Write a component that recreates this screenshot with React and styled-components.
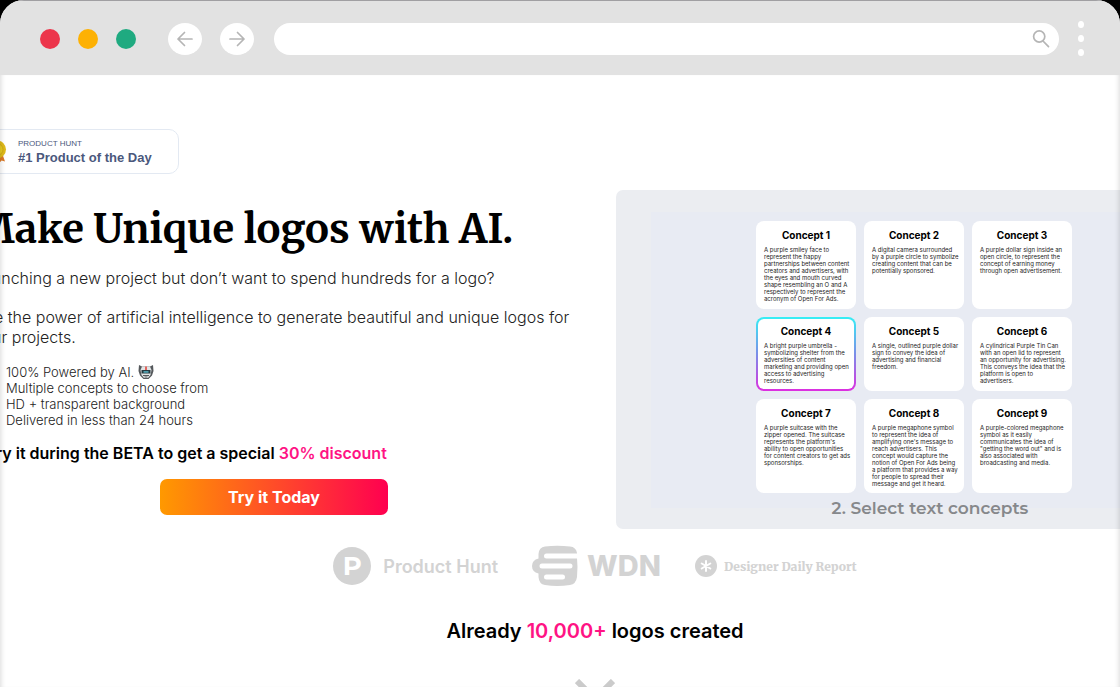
import React from "react";
import styled, { createGlobalStyle } from "styled-components";

const concepts = [
  {
    id: 1,
    text: "A purple smiley face to\nrepresent the happy\npartnerships between content\ncreators and advertisers, with\nthe eyes and mouth curved\nshape resembling an O and A\nrespectively to represent the\nacronym of Open For Ads.",
  },
  {
    id: 2,
    text: "A digital camera surrounded\nby a purple circle to symbolize\ncreating content that can be\npotentially sponsored.",
  },
  {
    id: 3,
    text: "A purple dollar sign inside an\nopen circle, to represent the\nconcept of earning money\nthrough open advertisement.",
  },
  {
    id: 4,
    selected: true,
    text: "A bright purple umbrella -\nsymbolizing shelter from the\nadversities of content\nmarketing and providing open\naccess to advertising\nresources.",
  },
  {
    id: 5,
    text: "A single, outlined purple dollar\nsign to convey the idea of\nadvertising and financial\nfreedom.",
  },
  {
    id: 6,
    text: "A cylindrical Purple Tin Can\nwith an open lid to represent\nan opportunity for advertising.\nThis conveys the idea that the\nplatform is open to\nadvertisers.",
  },
  {
    id: 7,
    text: "A purple suitcase with the\nzipper opened. The suitcase\nrepresents the platform's\nability to open opportunities\nfor content creators to get ads\nsponsorships.",
  },
  {
    id: 8,
    text: "A purple megaphone symbol\nto represent the idea of\namplifying one's message to\nreach advertisers. This\nconcept would capture the\nnotion of Open For Ads being\na platform that provides a way\nfor people to spread their\nmessage and get it heard.",
  },
  {
    id: 9,
    text: "A purple-colored megaphone\nsymbol as it easily\ncommunicates the idea of\n\"getting the word out\" and is\nalso associated with\nbroadcasting and media.",
  },
];

const Arrow = ({ back }) => (
  <svg width="18" height="16" viewBox="0 0 18 16" fill="none" stroke="#b5b5b5" strokeWidth="1.7" strokeLinecap="round" strokeLinejoin="round" aria-hidden="true">
    {back ? <path d="M16 8H2M8.5 1.5L2 8l6.5 6.5" /> : <path d="M2 8h14M9.5 1.5L16 8l-6.5 6.5" />}
  </svg>
);

const Toolbar = () => (
  <Bar>
    <Lights>
      <Light $color="#ec354b" />
      <Light $color="#fdb104" />
      <Light $color="#1faa80" />
    </Lights>
    <NavButtons>
      <NavButton type="button" aria-label="Back">
        <Arrow back />
      </NavButton>
      <NavButton type="button" aria-label="Forward">
        <Arrow />
      </NavButton>
    </NavButtons>
    <Address>
      <input type="text" aria-label="Address" />
      <svg width="18" height="18" viewBox="0 0 18 18" fill="none" stroke="#b5b5b5" strokeWidth="1.7" strokeLinecap="round" aria-hidden="true">
        <circle cx="7.2" cy="6.5" r="5.6" />
        <path d="M11 11l5.5 5.7" />
      </svg>
    </Address>
    <MenuButton type="button" aria-label="Menu">
      <span />
      <span />
      <span />
    </MenuButton>
  </Bar>
);

const Medal = () => (
  <svg width="20" height="24" viewBox="0 0 20 24" aria-hidden="true">
    <path d="M5 13L2 22l4-1.5L8 24l3-8zM15 13l3 8.5-3.5-1L12 23.5 9 16z" fill="#dd7a26" />
    <circle cx="10" cy="9.5" r="9" fill="#e0bb1b" />
    <circle cx="10" cy="9.5" r="6" fill="#e8cb22" stroke="#cfab16" />
  </svg>
);

const Robot = () => (
  <svg width="16" height="16" viewBox="0 0 16 16" aria-hidden="true">
    <path d="M1 1l3 1.5h8L15 1l.5 6-1.5 4.500L10.500 15h-5L2 11.500.5 7z" fill="#55595c" />
    <path d="M4 2.500h8L13.500 6l-1 5-2.500 3H6l-2.500-3-1-5z" fill="#e3e5e6" />
    <path d="M3.500 6h9v3.500h-9z" fill="#26383f" />
    <path d="M5.500 7h5v1.800h-5z" fill="#4f9fae" />
    <path d="M7.200 2.500h1.600V6H7.200z" fill="#e2453c" />
    <path d="M5 11.500h6M6.500 13h3" stroke="#55595c" />
  </svg>
);

const App = () => {
  return (
    <>
      <GlobalStyle />
      <Browser>
        <Toolbar />
        <Page>
          <Badge href="#product-hunt">
            <Medal />
            <span>
              <small>PRODUCT HUNT</small>
              <strong>#1 Product of the Day</strong>
            </span>
          </Badge>
          <Hero>
            <Intro>
              <h1>Make Unique logos with AI.</h1>
              <p>Launching a new project but don’t want to spend hundreds for a logo?</p>
              <p>Use the power of artificial intelligence to generate beautiful and unique logos for your projects.</p>
              <ul>
                <li>
                  100% Powered by AI. <Robot />
                </li>
                <li>Multiple concepts to choose from</li>
                <li>HD + transparent background</li>
                <li>Delivered in less than 24 hours</li>
              </ul>
              <h2>
                Try it during the BETA to get a special <Pink>30% discount</Pink>
              </h2>
              <TryButton type="button">Try it Today</TryButton>
            </Intro>
            <Demo>
              <Pane>
                <Concepts>
                  {concepts.map(({ id, text, selected }) => (
                    <Concept key={id} $selected={selected}>
                      <h3>Concept {id}</h3>
                      <p>{text}</p>
                    </Concept>
                  ))}
                </Concepts>
              </Pane>
              <figcaption>2. Select text concepts</figcaption>
            </Demo>
          </Hero>
          <Press>
            <Brand $gap="12px">
              <Disc>P</Disc>
              <ProductHunt>Product Hunt</ProductHunt>
            </Brand>
            <Brand $gap="9px">
              <svg width="46" height="42" viewBox="0 0 46 42" aria-hidden="true">
                <path
                  d="M13 1.500Q25 0 38 1.500Q44 2 45 8L45 13Q46 22 45 32Q44 39 38 40Q25 42 13 40Q7 39 6.500 32V28.500Q0 27 0 21Q0 15 6.500 13.500V9Q7 2 13 1.500z"
                  fill="#d3d3d3"
                />
                <path d="M14.500 8.500H46v5H14.500q-2.500 0-2.500-2.500t2.500-2.500zM10 18.500h28q2.500 0 2.500 2.500T38 23.500H10q-2.500 0-2.500-2.500t2.500-2.500zM14.500 29.500h16q2.500 0 2.500 2.500t-2.500 2.500h-16Q12 34.500 12 32t2.500-2.500z" fill="#fff" />
              </svg>
              <Wdn>WDN</Wdn>
            </Brand>
            <Brand $gap="7px">
              <svg width="22" height="22" viewBox="0 0 22 22" aria-hidden="true">
                <circle cx="11" cy="11" r="11" fill="#d3d3d3" />
                <path d="M11 6v10M6.700 8.500l8.600 5M15.300 8.500l-8.600 5" stroke="#fff" strokeWidth="2" strokeLinecap="round" />
              </svg>
              <Designer>Designer Daily Report</Designer>
            </Brand>
          </Press>
          <Created>
            Already <Pink>10,000+</Pink> logos created
          </Created>
          <Chevron width="40" height="26" viewBox="0 0 40 26" fill="none" stroke="#cbcbcb" strokeWidth="6" aria-hidden="true">
            <path d="M2 2l18 18L38 2" />
          </Chevron>
        </Page>
      </Browser>
    </>
  );
};

const GlobalStyle = createGlobalStyle`
  * {
    box-sizing: border-box;
    margin: 0;
    padding: 0;
  }
  body {
    background: #000;
    color: #000;
    font-family: Inter, "Liberation Sans", sans-serif;
  }
`;

const Browser = styled.div`
  position: relative;
  height: 100vh;
  overflow: hidden;
  border-radius: 24px 24px 0 0;
  background: #fff;

  /* soft shade along both edges of the window */
  &::after {
    content: "";
    position: absolute;
    inset: 75px 0 0;
    pointer-events: none;
    box-shadow: inset 5px 0 5px -4px rgba(0, 0, 0, 0.15),
      inset -5px 0 5px -4px rgba(0, 0, 0, 0.15);
  }
`;

const Bar = styled.header`
  display: flex;
  align-items: center;
  height: 75px;
  padding: 2px 36px 0 40px;
  border-top: 1px solid #a09fa2;
  background: #e2e2e2;
`;

const Lights = styled.div`
  display: flex;
  gap: 18px;
  margin-right: 32px;
`;

const Light = styled.span`
  width: 20px;
  height: 20px;
  border-radius: 50%;
  background: ${(props) => props.$color};
`;

const NavButtons = styled.nav`
  display: flex;
  gap: 18px;
  margin-right: 20px;
`;

const NavButton = styled.button`
  display: grid;
  place-items: center;
  width: 34px;
  height: 32px;
  border: none;
  border-radius: 50%;
  background: #fff;
`;

const Address = styled.div`
  display: flex;
  flex: 1;
  align-items: center;
  height: 32px;
  padding: 0 9px 0 16px;
  border-radius: 16px;
  background: #fff;

  input {
    flex: 1;
    border: none;
    outline: none;
    background: none;
  }
`;

const MenuButton = styled.button`
  display: flex;
  flex-direction: column;
  gap: 7px;
  margin-left: 19px;
  padding-bottom: 2px;
  border: none;
  background: none;

  span {
    width: 6px;
    height: 7px;
    border-radius: 50%;
    background: #fff;
  }
`;

/* the page is wider than the window and runs out on both sides */
const Page = styled.main`
  margin: 0 -96px 0 -26px;
  padding-top: 54px;
`;

const Badge = styled.a`
  display: flex;
  align-items: center;
  gap: 11px;
  width: 205px;
  height: 45px;
  padding-left: 12px;
  border: 1px solid #e3e9f2;
  border-radius: 10px;
  color: #4b587c;
  font-family: "Liberation Sans", Arial, sans-serif;
  text-decoration: none;

  small,
  strong {
    display: block;
  }
  small {
    font-size: 8px;
    line-height: 12px;
  }
  strong {
    font-size: 13px;
    line-height: 16px;
  }
`;

const Hero = styled.section`
  display: grid;
  grid-template-columns: 1fr 1fr;
  gap: 42px;
  margin-top: 16px;
`;

const Intro = styled.div`
  padding-top: 14px;

  h1 {
    margin-bottom: 14px;
    font-family: Merriweather, "Liberation Serif", serif;
    font-size: 40px;
    line-height: 50px;
    white-space: nowrap;
  }
  p {
    margin-bottom: 19px;
    color: #222;
    font-size: 16px;
    font-weight: 300;
    line-height: 20px;
  }
  ul {
    margin: -2px 0 15px 32px;
    color: #222;
    font-size: 13px;
    font-weight: 300;
    line-height: 16px;
    list-style: none;
  }
  li svg {
    vertical-align: top;
  }
  h2 {
    margin: 0 0 16px 12px;
    font-size: 16px;
    font-weight: 600;
    line-height: 20px;
  }
`;

const Pink = styled.span`
  color: #ff1384;
`;

const TryButton = styled.button`
  display: block;
  width: 228px;
  height: 36px;
  margin: 0 auto;
  border: none;
  border-radius: 7px;
  background: linear-gradient(90deg, #ff9900, #ff0050);
  color: #fff;
  font-family: inherit;
  font-size: 16px;
  font-weight: 700;
`;

const Demo = styled.figure`
  height: 339px;
  padding: 22px 39px 0 35px;
  border-radius: 7px;
  background: #ebedf1;

  figcaption {
    position: relative;
    margin-top: -10px;
    padding-left: 32px;
    color: #86888b;
    font-family: Montserrat, Inter, sans-serif;
    font-size: 17px;
    font-weight: 600;
    line-height: 20px;
    text-align: center;
  }
`;

const Pane = styled.div`
  height: 296px;
  padding-top: 9px;
  background: #e8ebf3;
`;

const Concepts = styled.div`
  display: grid;
  grid-template-columns: repeat(3, 100px);
  grid-template-rows: 88px 74px 94px;
  justify-content: center;
  gap: 8px;
`;

const Concept = styled.article`
  padding: 6px 6px 0;
  border: 2px solid transparent;
  border-radius: 8px;
  background: ${(props) =>
    props.$selected
      ? "linear-gradient(#fff, #fff) padding-box, linear-gradient(#35eff5, #7a8ee8 50%, #dd2fe0) border-box"
      : "#fff"};

  h3 {
    margin-bottom: 5px;
    font-size: 10px;
    line-height: 12px;
    text-align: center;
  }
  p {
    color: #222;
    font-size: 6px;
    line-height: 7px;
    white-space: pre;
  }
`;

const Press = styled.section`
  display: flex;
  align-items: center;
  justify-content: center;
  gap: 34px;
  margin-top: 16px;
  color: #d3d3d3;
`;

const Brand = styled.div`
  display: flex;
  align-items: center;
  gap: ${(props) => props.$gap};
`;

const Disc = styled.span`
  width: 38px;
  height: 38px;
  border-radius: 50%;
  background: #d3d3d3;
  color: #fff;
  font-family: Montserrat, Inter, sans-serif;
  font-size: 26px;
  font-weight: 700;
  line-height: 38px;
  text-align: center;
`;

const ProductHunt = styled.span`
  font-size: 18px;
  font-weight: 600;
`;

const Wdn = styled.span`
  font-size: 29px;
  font-weight: 800;
  line-height: 40px;
`;

const Designer = styled.span`
  font-family: Merriweather, "Liberation Serif", serif;
  font-size: 12px;
  font-weight: 900;
`;

const Created = styled.p`
  margin-top: 32px;
  font-size: 20px;
  font-weight: 600;
  line-height: 24px;
  text-align: center;
`;

const Chevron = styled.svg`
  display: block;
  margin: 36px auto 0;
`;

export default App;
